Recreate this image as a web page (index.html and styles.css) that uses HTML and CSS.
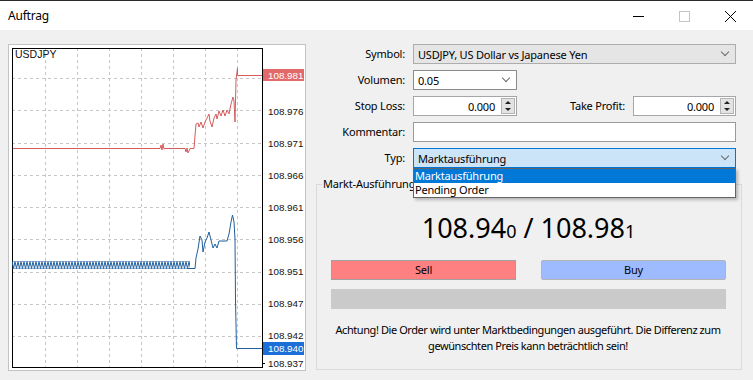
FILE: index.html
```html
<!DOCTYPE html>
<html lang="de">
<head>
<meta charset="utf-8">
<title>Auftrag</title>
<link rel="stylesheet" href="styles.css">
</head>
<body>
<div class="window">
  <div class="titlebar">
    <span class="title">Auftrag</span>
    <div class="controls">
      <svg class="ctl" width="46" height="30" viewBox="0 0 46 30"><line x1="17" y1="15.5" x2="28" y2="15.5" stroke="#000" stroke-width="1"/></svg>
      <svg class="ctl" width="46" height="30" viewBox="0 0 46 30"><rect x="17.5" y="10.5" width="10" height="10" fill="none" stroke="#c4c4c4" stroke-width="1"/></svg>
      <svg class="ctl" width="46" height="30" viewBox="0 0 46 30"><path d="M17 10 L28 21 M28 10 L17 21" stroke="#000" stroke-width="1" fill="none"/></svg>
    </div>
  </div>
  <div class="main">
    <div class="chart">
      <svg width="296" height="325" viewBox="0 0 296 325">
        <defs>
          <pattern id="zz" width="3" height="8" patternUnits="userSpaceOnUse" x="12" y="261">
            <path d="M0,0.5 L1.5,7.5 L3,0.5" stroke="#1f5f9e" stroke-width="1" fill="none"/>
          </pattern>
        </defs>
        <g transform="translate(-9,-45)">
          <g class="grid">
            <line x1="45.5" y1="48" x2="45.5" y2="367"/>
            <line x1="77.5" y1="48" x2="77.5" y2="367"/>
            <line x1="109.5" y1="48" x2="109.5" y2="367"/>
            <line x1="141.5" y1="48" x2="141.5" y2="367"/>
            <line x1="173.5" y1="48" x2="173.5" y2="367"/>
            <line x1="205.5" y1="48" x2="205.5" y2="367"/>
            <line x1="237.5" y1="48" x2="237.5" y2="367"/>
            <line x1="12" y1="78.5" x2="262" y2="78.5"/>
            <line x1="12" y1="110.5" x2="262" y2="110.5"/>
            <line x1="12" y1="143.5" x2="262" y2="143.5"/>
            <line x1="12" y1="175.5" x2="262" y2="175.5"/>
            <line x1="12" y1="207.5" x2="262" y2="207.5"/>
            <line x1="12" y1="239.5" x2="262" y2="239.5"/>
            <line x1="12" y1="272.5" x2="262" y2="272.5"/>
            <line x1="12" y1="304.5" x2="262" y2="304.5"/>
            <line x1="12" y1="336.5" x2="262" y2="336.5"/>
          </g>
          <rect x="12.5" y="48.5" width="250" height="319" fill="none" stroke="#000" stroke-width="1"/>
          <polyline class="ask" points="13,148.5 160,148.5 161,145 162,150 163,144 164,149 165,148.5 185,148.5 186,152 187,148 188,153 190,148.5 194,148.5 195,136 196,124 198,123 199,127 201,122 203,128 205,122 207,118 209,114 210,121 212,127 214,118 216,114 217,119 219,111 221,116 223,110 225,116 227,110 229,114 231,104 233,97 234,101 235,122 236,80 237.5,68 237.5,75.5 262,75.5"/>
          <rect x="12" y="261" width="178" height="8" fill="url(#zz)"/>
          <line x1="12" y1="261.5" x2="190" y2="261.5" stroke="#1f5f9e" stroke-opacity="0.5"/>
          <line x1="12" y1="268.5" x2="190" y2="268.5" stroke="#1f5f9e" stroke-opacity="0.5"/>
          <polyline class="bid" points="188,268.5 195,268.5 196,258 198,249 200,236 202,240 203,252 205,242 207,238 209,232 211,240 213,248 215,244 217,248 219,241 223,241 227,241 229,234 231,222 232.5,215 234,222 235,239 235.5,300 236.5,348.5 262,348.5"/>
          <line x1="262" y1="363.5" x2="265" y2="363.5" stroke="#000"/>
          <g class="axis">
            <text x="268" y="115">108.976</text>
            <text x="268" y="147">108.971</text>
            <text x="268" y="179">108.966</text>
            <text x="268" y="211">108.961</text>
            <text x="268" y="243">108.956</text>
            <text x="268" y="275">108.951</text>
            <text x="268" y="307">108.947</text>
            <text x="268" y="339">108.942</text>
            <text x="268" y="367">108.937</text>
          </g>
          <rect x="263" y="69" width="41" height="12" fill="#e36a6a"/>
          <text class="tag" x="268" y="79">108.981</text>
          <rect x="263" y="342" width="41" height="13" fill="#1c6fd6"/>
          <text class="tag" x="268" y="352">108.940</text>
          <text class="sym" x="15" y="58">USDJPY</text>
        </g>
      </svg>
    </div>
    <div class="order">
      <div class="form">
        <span class="lbl">Symbol:</span>
        <div class="field select symbol"><span>USDJPY, US Dollar vs Japanese Yen</span><i class="chev"></i></div>
        <span class="lbl">Volumen:</span>
        <div class="row">
          <div class="field select vol"><span>0.05</span><i class="chev"></i></div>
        </div>
        <span class="lbl">Stop Loss:</span>
        <div class="row">
          <div class="field num sl"><span>0.000</span><span class="spin"><b class="up"></b><b class="dn"></b></span></div>
          <span class="lbl tp-lbl">Take Profit:</span>
          <div class="field num tp"><span>0.000</span><span class="spin"><b class="up"></b><b class="dn"></b></span></div>
        </div>
        <span class="lbl">Kommentar:</span>
        <div class="field edit"></div>
        <span class="lbl">Typ:</span>
        <div class="field select typ"><span>Marktausführung</span><i class="chev"></i></div>
      </div>
      <div class="group">
        <span class="legend">Markt-Ausführung</span>
        <div class="price">108.94<small>0</small> / 108.98<small>1</small></div>
        <div class="buttons">
          <div class="btn sell">Sell</div>
          <div class="btn buy">Buy</div>
        </div>
        <div class="bar"></div>
        <p class="warn">Achtung! Die Order wird unter Marktbedingungen ausgeführt. Die Differenz zum<br>gewünschten Preis kann beträchtlich sein!</p>
      </div>
      <ul class="dropdown">
        <li class="sel">Marktausführung</li>
        <li>Pending Order</li>
      </ul>
    </div>
  </div>
</div>
</body>
</html>
```
FILE: styles.css
```css
* { box-sizing: border-box; }
html, body { margin: 0; padding: 0; }
body {
  width: 753px;
  height: 380px;
  overflow: hidden;
  background: #f0f0f0;
  font-family: "Noto Sans", "Open Sans", sans-serif;
  font-size: 11px;
  letter-spacing: -0.2px;
  color: #000;
}
.window { width: 753px; height: 380px; display: flex; flex-direction: column; }
.titlebar {
  height: 30px;
  background: #fff;
  border-top: 1px solid #2b2b2b;
  display: flex;
  align-items: center;
  justify-content: space-between;
}
.title { padding-left: 8px; font-size: 12px; letter-spacing: -0.2px; }
.controls { display: flex; margin-right: -1px; }
.ctl { display: block; }
.main { display: flex; padding: 14px 0 0 8px; }
.chart {
  width: 298px;
  height: 327px;
  background: #fff;
  border: 1px solid #c3c3c3;
  margin-right: 10px;
}
.chart svg { display: block; }
.grid line { stroke: #c6c6c6; stroke-width: 1; stroke-dasharray: 3 3; }
.ask { fill: none; stroke: #d65c5c; stroke-width: 1; }
.bid { fill: none; stroke: #1f5f9e; stroke-width: 1; }
.axis text, .tag, .sym { font-family: "Liberation Sans", Arial, sans-serif; font-size: 9.8px; letter-spacing: 0; }
.sym { font-size: 10.5px; }
.axis text, .sym { fill: #111; }
.tag { fill: #fff; }

.order { position: relative; width: 426px; }
.form {
  display: grid;
  grid-template-columns: 89px 323px;
  grid-auto-rows: 20px;
  column-gap: 8px;
  row-gap: 6px;
}
.lbl { text-align: right; line-height: 20px; white-space: nowrap; }
.row { display: flex; align-items: center; }
.field {
  height: 20px;
  border: 1px solid #8a8a8a;
  background: #fff;
  display: flex;
  align-items: center;
  padding: 0 4px;
  white-space: nowrap;
}
.select { justify-content: space-between; }
.symbol { background: #e5e5e5; border-color: #adadad; }
.vol { width: 104px; }
.typ { background: #cce4f7; border-color: #0078d7; }
.chev {
  width: 6px; height: 6px;
  border-right: 1px solid #6a6a6a;
  border-bottom: 1px solid #6a6a6a;
  transform: rotate(45deg);
  margin: -4px 3px 0 0;
}
.num { justify-content: flex-end; padding: 0 1px 0 4px; border-color: #a6a6a6; }
.num > span:first-child { margin-right: 6px; }
.sl { width: 104px; }
.tp { width: 103px; }
.tp-lbl { flex: 1; padding-right: 8px; }
.spin {
  width: 14px; height: 16px;
  background: #e3e3e3;
  border: 1px solid #b4b4b4;
  display: flex; flex-direction: column;
  align-items: center; justify-content: space-around;
}
.spin b { width: 0; height: 0; border-left: 3px solid transparent; border-right: 3px solid transparent; }
.spin .up { border-bottom: 3px solid #222; }
.spin .dn { border-top: 3px solid #222; }
.edit { border-color: #9a9a9a; }

.group {
  position: relative;
  margin-top: 16px;
  height: 186px;
  border: 1px solid #dadada;
  padding: 26px 15px 0 14px;
  display: flex;
  flex-direction: column;
}
.legend {
  position: absolute;
  top: -9px;
  left: 5px;
  background: #f0f0f0;
  padding: 0 1px;
  line-height: 16px;
}
.price {
  text-align: center;
  font-size: 27px;
  letter-spacing: 0;
  line-height: 34px;
  height: 34px;
}
.price small { font-size: 18px; }
.buttons { display: flex; justify-content: space-between; margin-top: 15px; }
.btn {
  width: 185px;
  height: 20px;
  line-height: 18px;
  text-align: center;
  border: 1px solid #a0a0a0;
}
.sell { background: #ff8080; }
.buy { background: #9fbbff; border-color: #b4b4b4; border-radius: 2px; }
.bar { height: 20px; background: #cacaca; margin-top: 9px; }
.warn { margin: 13px -14px 0 -15px; text-align: center; line-height: 16px; white-space: nowrap; letter-spacing: -0.42px; }

.dropdown {
  position: absolute;
  left: 97px;
  top: 124px;
  width: 323px;
  margin: 0;
  padding: 0;
  list-style: none;
  background: #fff;
  border: 1px solid #646464;
  box-shadow: 2px 2px 3px rgba(0,0,0,0.25);
}
.dropdown li { height: 14px; line-height: 14px; padding-left: 1px; }
.dropdown .sel { background: #0078d7; color: #fff; }
```
